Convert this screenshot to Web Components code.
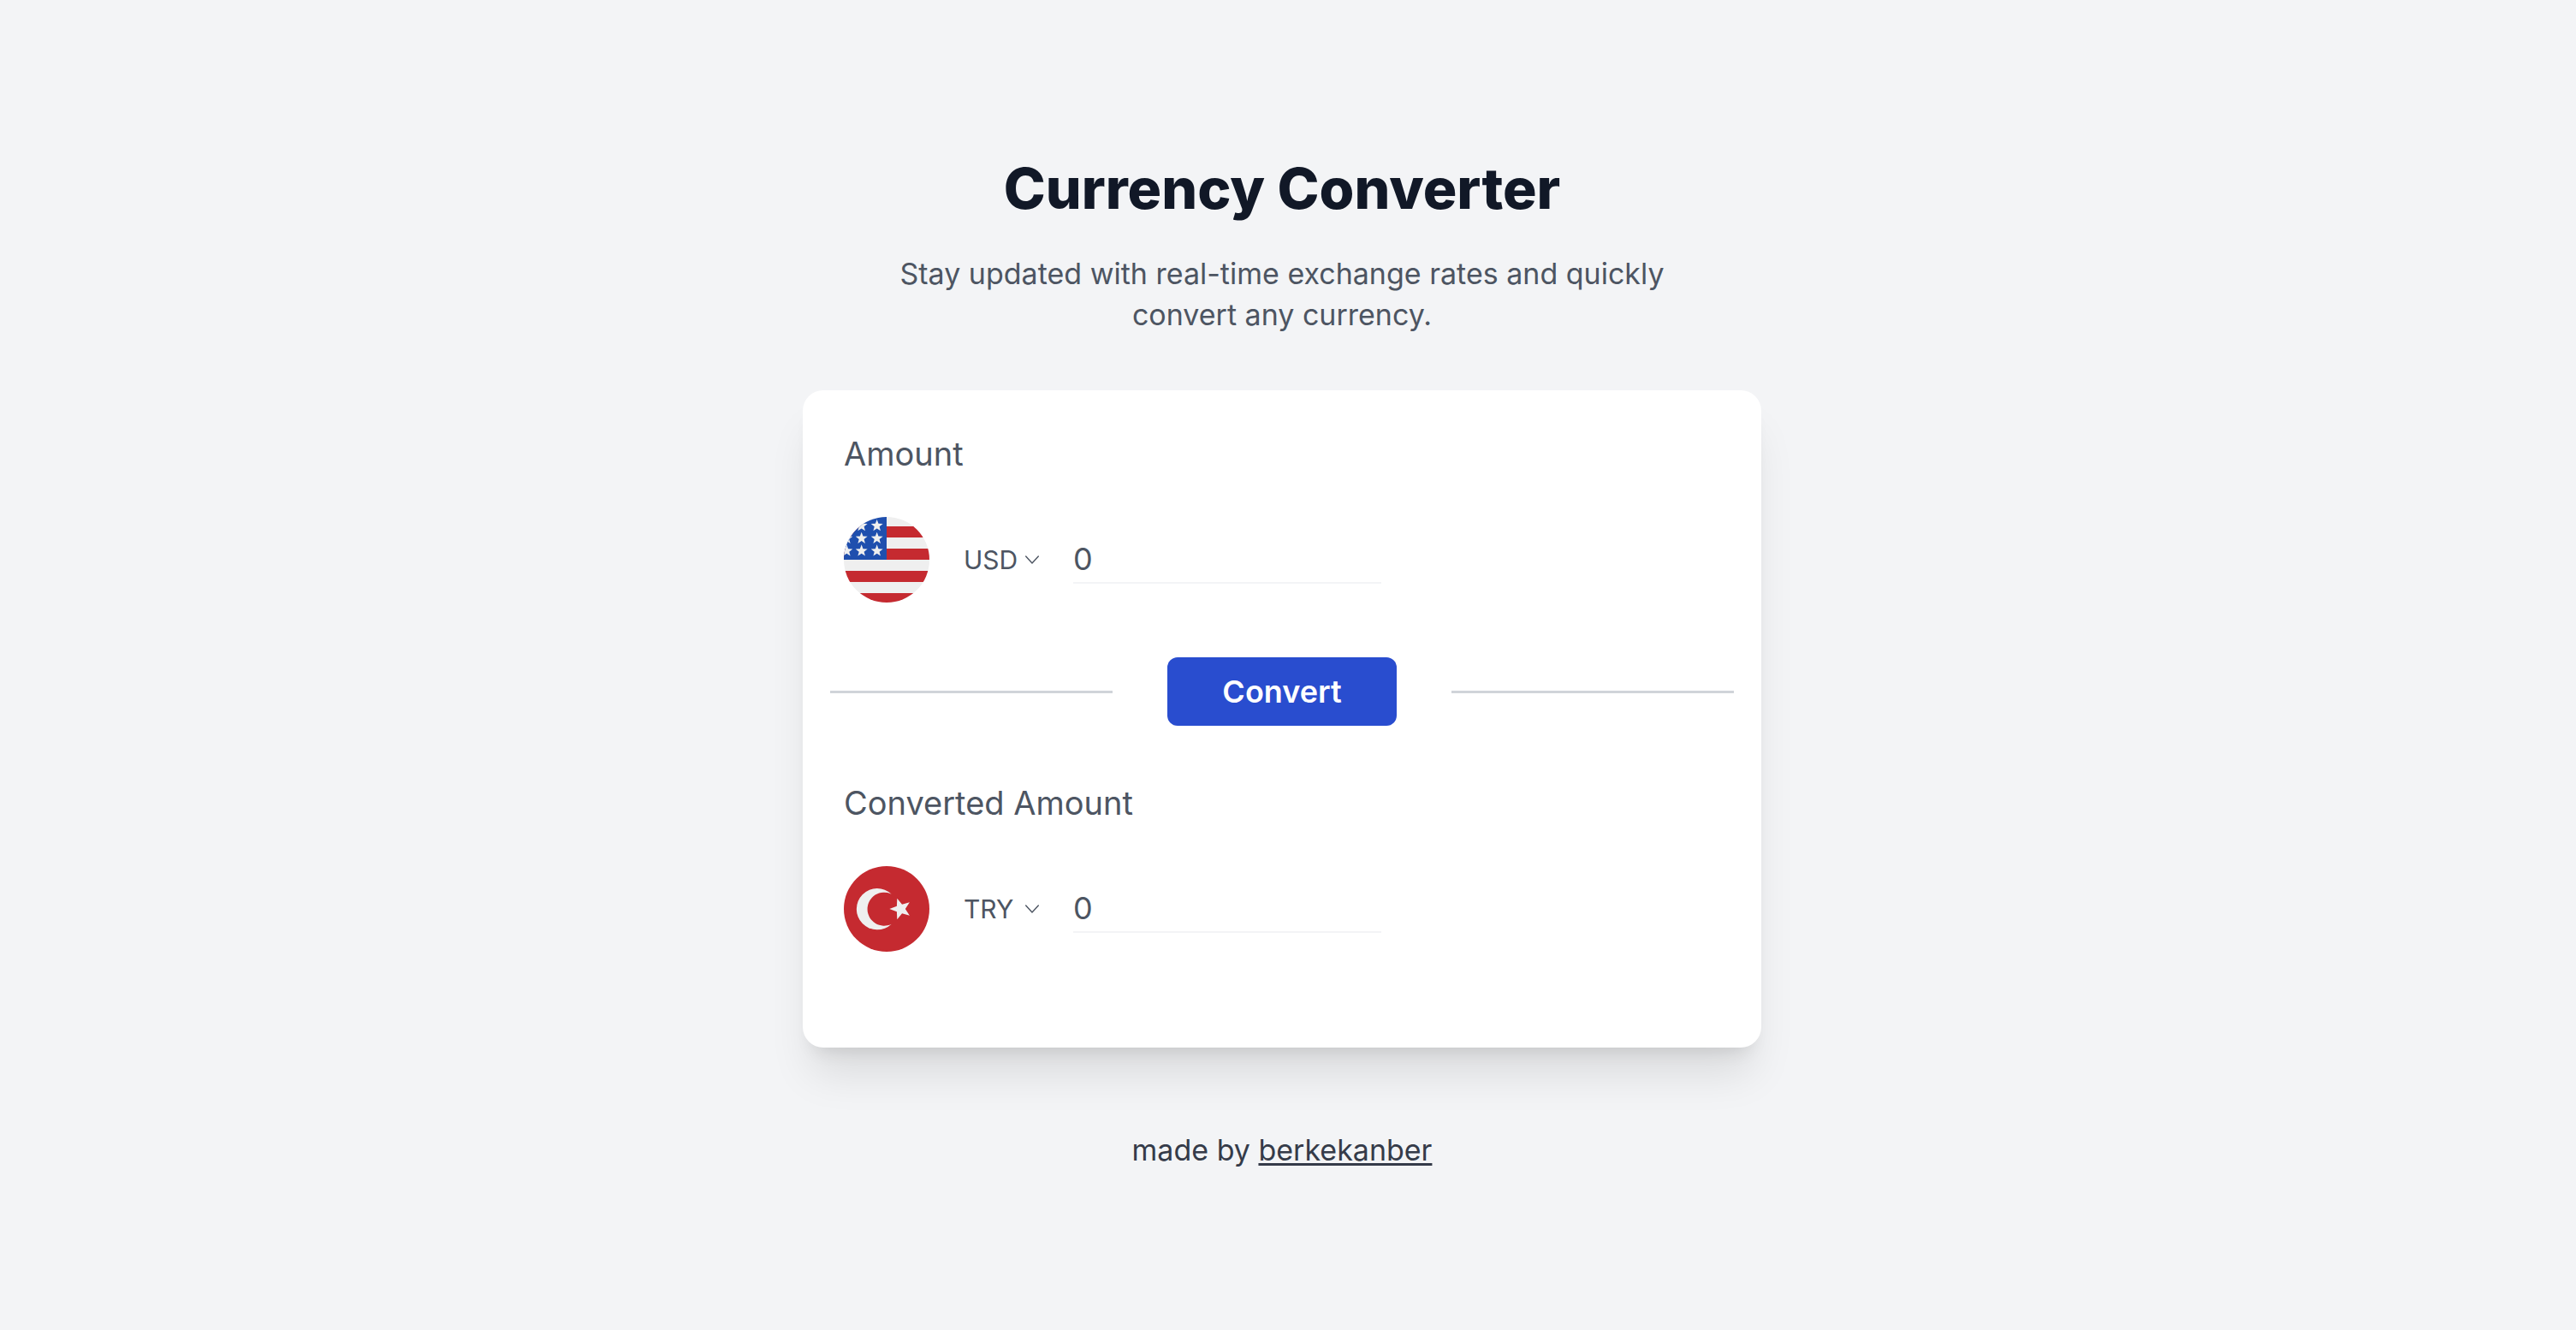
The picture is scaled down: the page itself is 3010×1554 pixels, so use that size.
<!DOCTYPE html>
<html lang="en">
<head>
<meta charset="utf-8">
<meta name="viewport" content="width=device-width, initial-scale=1">
<title>Currency Converter</title>
<style>
  html { background: #f3f4f6; }
  body { margin: 0; font-family: Inter, "Open Sans", sans-serif; color: #4d5562; }
</style>
</head>
<body>
<converter-page>
  <span slot="title">Currency Converter</span>
  <span slot="intro">Stay updated with real-time exchange rates and quickly convert any currency.</span>
  <converter-card>
    <currency-field slot="from" label="Amount" code="USD"></currency-field>
    <currency-field slot="to" label="Converted Amount" code="TRY"></currency-field>
  </converter-card>
  <made-by slot="footer" name="berkekanber">made by</made-by>
</converter-page>

<script>
class ConverterPage extends HTMLElement {
  connectedCallback() {
    this.attachShadow({ mode: 'open' }).innerHTML = `
      <style>
        :host { display: flex; justify-content: center; box-sizing: border-box; padding: 176px 14px 176px 0; }
        main { display: flex; flex-direction: column; width: 100%; max-width: 1120px; }
        header { display: flex; flex-direction: column; gap: 32px; text-align: center; margin-bottom: 64px; }
        h1 { margin: 0; font-size: 66px; line-height: 88px; font-weight: 800; color: #111827; }
        p { margin: 0 auto; max-width: 960px; font-size: 34px; line-height: 48px; }
        footer { margin-top: 96px; }
      </style>
      <main>
        <header>
          <h1><slot name="title"></slot></h1>
          <p><slot name="intro"></slot></p>
        </header>
        <slot></slot>
        <footer><slot name="footer"></slot></footer>
      </main>`;
  }
}

class ConverterCard extends HTMLElement {
  connectedCallback() {
    this.attachShadow({ mode: 'open' }).innerHTML = `
      <style>
        :host { display: block; }
        form { display: flex; flex-direction: column; gap: 48px; padding: 32px 32px 96px;
          background: #fff; border-radius: 24px;
          box-shadow: 0 40px 50px -10px rgba(0,0,0,.1), 0 16px 20px -12px rgba(0,0,0,.1); }
        .action { display: flex; align-items: center; gap: 64px; }
        hr { flex: 1; margin: 0; border: 0; height: 3px; background: #d0d4d9; }
        button { height: 80px; padding: 0 64px; border: 0; border-radius: 12px; background: #294dcf;
          color: #fff; font: 600 36px/56px Inter, "Open Sans", sans-serif; cursor: pointer; }
      </style>
      <form onsubmit="return false">
        <slot name="from"></slot>
        <div class="action"><hr><button type="submit">Convert</button><hr></div>
        <slot name="to"></slot>
      </form>`;
  }
}

class CurrencyField extends HTMLElement {
  connectedCallback() {
    const code = this.getAttribute('code');
    const options = ['USD', 'TRY'].map(c =>
      `<option${c === code ? ' selected' : ''}>${c}</option>`).join('');
    this.attachShadow({ mode: 'open' }).innerHTML = `
      <style>
        :host { display: flex; flex-direction: column; gap: 48px; padding: 16px; }
        label { font-size: 38px; line-height: 52px; }
        .row { display: flex; align-items: center; gap: 40px; }
        .pick { display: grid; align-items: center; width: 88px; }
        .pick > * { grid-area: 1 / 1; }
        select { appearance: none; width: 100%; margin: 0; padding: 0; border: 0; background: none;
          font: 400 30px/48px Inter, "Open Sans", sans-serif; color: inherit; cursor: pointer; }
        svg { justify-self: end; width: 16px; height: 16px; pointer-events: none; }
        input { width: 360px; min-width: 0; height: 56px; box-sizing: border-box; padding: 0;
          border: 0; border-bottom: 2px solid #f3f4f6; border-radius: 0; background: none; outline: 0;
          font: 400 36px/54px Inter, "Open Sans", sans-serif; color: inherit; }
      </style>
      <label for="amount">${this.getAttribute('label')}</label>
      <div class="row">
        <flag-icon code="${code}"></flag-icon>
        <div class="pick">
          <select aria-label="Currency">${options}</select>
          <svg viewBox="0 0 16 16" fill="none" stroke="currentColor" stroke-width="1.4" stroke-linecap="round" stroke-linejoin="round"><path d="M.7 4 8 12l7.3-8"/></svg>
        </div>
        <input id="amount" type="text" inputmode="decimal" value="0">
      </div>`;
  }
}

class FlagIcon extends HTMLElement {
  static star(cx, cy, r, turn) {
    const points = [];
    for (let i = 0; i < 10; i++) {
      const a = turn + i * Math.PI / 5, d = i % 2 ? r * .42 : r;
      points.push((cx + d * Math.sin(a)).toFixed(1) + ',' + (cy - d * Math.cos(a)).toFixed(1));
    }
    return `<polygon fill="#efefef" points="${points.join(' ')}"/>`;
  }
  static usd() {
    const stripes = [33, 111, 189, 267].map(y => `<path fill="#c52a30" d="M0 ${y}h300v39H0z"/>`).join('');
    const stars = [31, 75, 119].flatMap(y => [10, 62, 116].map(x => FlagIcon.star(x, y, 22, 0))).join('');
    return `<path fill="#efefef" d="M0 0h300v300H0z"/>${stripes}<path fill="#1f4fae" d="M0 0h150v150H0z"/>${stars}`;
  }
  static try() {
    return `<path fill="#c52a30" d="M0 0h300v300H0z"/>
      <path fill="#efefef" d="M167 98A72.5 72.5 0 1 0 167 203A58.5 58.5 0 1 1 167 98z"/>
      ${FlagIcon.star(199, 150, 39, -Math.PI / 2)}`;
  }
  connectedCallback() {
    const art = this.getAttribute('code') === 'USD' ? FlagIcon.usd() : FlagIcon.try();
    this.attachShadow({ mode: 'open' }).innerHTML = `
      <style>
        :host { display: block; flex: none; width: 100px; height: 100px; border-radius: 50%; overflow: hidden; }
        svg { display: block; width: 100%; height: 100%; }
      </style>
      <svg viewBox="0 0 300 300" aria-hidden="true">${art}</svg>`;
  }
}

class MadeBy extends HTMLElement {
  connectedCallback() {
    const name = this.getAttribute('name');
    this.attachShadow({ mode: 'open' }).innerHTML = `
      <style>
        :host { display: block; text-align: center; font-size: 34px; line-height: 48px; color: #353b49; }
        a { color: inherit; text-decoration: underline; text-decoration-thickness: 3px;
          text-underline-offset: 3px; text-decoration-skip-ink: none; }
      </style>
      <slot></slot> <a href="#${name}">${name}</a>`;
  }
}

customElements.define('flag-icon', FlagIcon);
customElements.define('currency-field', CurrencyField);
customElements.define('converter-card', ConverterCard);
customElements.define('made-by', MadeBy);
customElements.define('converter-page', ConverterPage);
</script>
</body>
</html>
